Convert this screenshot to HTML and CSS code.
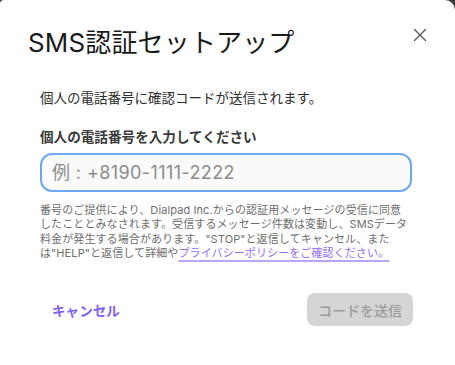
FILE: index.html
```html
<!DOCTYPE html>
<html lang="ja">
<head>
<meta charset="utf-8">
<link rel="stylesheet" href="styles.css">
</head>
<body>
<div class="dialog">
  <div class="header">
    <h1 class="title">SMS認証セットアップ</h1>
    <button class="close" aria-label="閉じる">
      <svg width="14" height="14" viewBox="0 0 14 14"><path d="M1.5 1.5 L12.5 12.5 M12.5 1.5 L1.5 12.5" stroke="#5a5a5a" stroke-width="1.4" stroke-linecap="round" fill="none"/></svg>
    </button>
  </div>
  <div class="content">
    <p class="subtitle">個人の電話番号に確認コードが送信されます。</p>
    <label class="label" for="phone">個人の電話番号を入力してください</label>
    <input class="input" id="phone" type="text" placeholder="例 : +8190-1111-2222">
    <p class="help">番号のご提供により、Dialpad Inc.からの認証用メッセージの受信に同意<br>したこととみなされます。受信するメッセージ件数は変動し、SMSデータ<br>料金が発生する場合があります。"STOP"と返信してキャンセル、また<br>は"HELP"と返信して詳細や<a class="link" href="#">プライバシーポリシーをご確認ください。</a></p>
    <div class="footer">
      <button class="cancel">キャンセル</button>
      <button class="send" disabled>コードを送信</button>
    </div>
  </div>
</div>
</body>
</html>
```
FILE: styles.css
```css
html, body {
  margin: 0;
  padding: 0;
  background: #3a3a3a;
}
body {
  font-family: "Inter", "Noto Sans CJK JP", sans-serif;
  width: 455px;
  height: 365px;
  overflow: hidden;
}
.dialog {
  width: 455px;
  height: 365px;
  background: #ffffff;
  border-radius: 4px 10px 0 0;
  box-sizing: border-box;
}
.header {
  display: flex;
  justify-content: space-between;
  align-items: flex-start;
  padding: 25px 28px 0 28px;
}
.title {
  margin: 0;
  font-size: 26px;
  line-height: 36px;
  font-weight: 400;
  color: #1a1a1a;
  letter-spacing: 0.15px;
}
.close {
  margin-top: 3px;
  width: 14px;
  height: 14px;
  padding: 0;
  border: none;
  background: none;
  display: flex;
}
.content {
  padding: 0 43px 0 40px;
}
.subtitle {
  margin: 27px 0 0;
  font-size: 13.5px;
  line-height: 20px;
  color: #2e2e2e;
}
.label {
  display: block;
  margin-top: 19px;
  font-size: 13.6px;
  line-height: 20px;
  font-weight: 700;
  color: #3a3a3a;
}
.input {
  display: block;
  margin-top: 6px;
  width: 100%;
  height: 39px;
  box-sizing: border-box;
  border: 2px solid #6ea8f5;
  border-radius: 12px;
  background: #fafafa;
  padding: 0 10px;
  font-family: "Inter", "Noto Sans CJK JP", sans-serif;
  font-size: 18px;
  letter-spacing: 0.4px;
  color: #333;
  outline: none;
}
.input::placeholder {
  color: #8c8c8c;
}
.help {
  margin: 11px 0 0;
  font-size: 11px;
  line-height: 14.3px;
  color: #6e6e6e;
  white-space: nowrap;
  letter-spacing: 0.1px;
}
.link {
  color: #8f6ff7;
  text-decoration: underline;
  text-decoration-color: #b9a6fb;
  text-decoration-thickness: 1.5px;
  text-underline-offset: 3px;
}
.footer {
  margin-top: 33px;
  display: flex;
  justify-content: space-between;
  align-items: center;
}
.cancel {
  margin-left: 12px;
  padding: 0;
  border: none;
  background: none;
  font-family: "Inter", "Noto Sans CJK JP", sans-serif;
  font-size: 13.6px;
  font-weight: 700;
  color: #8160f2;
}
.send {
  width: 106px;
  height: 33px;
  margin-right: -1px;
  border: none;
  border-radius: 8px;
  background: #d5d5d5;
  font-family: "Inter", "Noto Sans CJK JP", sans-serif;
  font-size: 14px;
  font-weight: 500;
  color: #9b9b9b;
  padding: 0;
}
```
